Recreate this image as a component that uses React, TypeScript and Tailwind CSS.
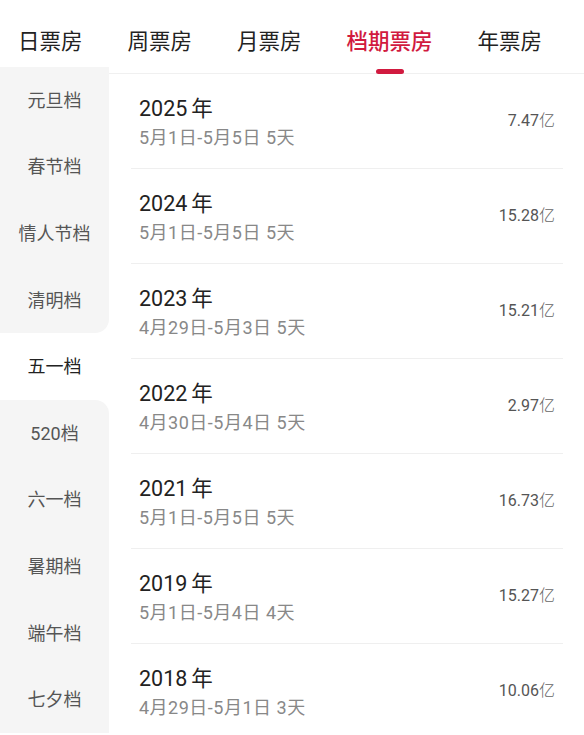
import React from 'react'

const tabs = ['日票房', '周票房', '月票房', '档期票房', '年票房']
const activeTab = 3

const seasons = ['元旦档', '春节档', '情人节档', '清明档', '五一档', '520档', '六一档', '暑期档', '端午档', '七夕档']
const activeSeason = 4

const rows = [
  { year: '2025', range: '5月1日-5月5日 5天', value: '7.47' },
  { year: '2024', range: '5月1日-5月5日 5天', value: '15.28' },
  { year: '2023', range: '4月29日-5月3日 5天', value: '15.21' },
  { year: '2022', range: '4月30日-5月4日 5天', value: '2.97' },
  { year: '2021', range: '5月1日-5月5日 5天', value: '16.73' },
  { year: '2019', range: '5月1日-5月4日 4天', value: '15.27' },
  { year: '2018', range: '4月29日-5月1日 3天', value: '10.06' },
]

export default function App() {
  return (
    <div className="w-[584px] h-[735px] overflow-hidden bg-white font-['Roboto','Noto_Sans_CJK_SC',sans-serif]">
      <header className="h-[74px] flex items-center pl-[18px] gap-[45px] border-b border-[#f0f0f0]">
        {tabs.map((t, i) => (
          <div
            key={t}
            className={
              'relative h-full flex items-center text-[21.5px] pt-[12px] ' +
              (i === activeTab ? 'text-[#d11a3f] font-medium' : 'text-[#222]')
            }
          >
            {t}
            {i === activeTab && (
              <span className="absolute left-1/2 -translate-x-1/2 bottom-[-1px] w-[28px] h-[5px] rounded-full bg-[#d11a3f]" />
            )}
          </div>
        ))}
      </header>

      <div className="flex">
        <aside className="w-[109px] shrink-0 flex flex-col -mt-[7px]">
          {seasons.map((s, i) => {
            let cls = 'bg-[#f5f5f5] text-[#555]'
            if (i === activeSeason) cls = 'bg-white text-[#222]'
            else if (i === activeSeason - 1) cls += ' rounded-br-[14px]'
            else if (i === activeSeason + 1) cls += ' rounded-tr-[14px]'
            return (
              <div key={s} className={'h-[66.6px] shrink-0 flex items-center justify-center text-[18px] ' + cls}>
                {s}
              </div>
            )
          })}
        </aside>

        <main className="flex-1 flex flex-col">
          {rows.map((r) => (
            <div
              key={r.year}
              className="h-[95px] shrink-0 ml-[22px] mr-[21px] flex items-center justify-between border-b border-[#efefef]"
            >
              <div className="pl-[8px] pt-[3px]">
                <div className="text-[21.5px] leading-[28px] text-[#222]">
                  {r.year}
                  <span className="ml-[4px]">年</span>
                </div>
                <div className="mt-[3px] text-[18px] leading-[24px] text-[#888] tracking-[0.5px]">{r.range}</div>
              </div>
              <div className="pr-[8px] text-[16px] text-[#555]">
                {r.value}
                <span className="font-light text-[#666]">亿</span>
              </div>
            </div>
          ))}
        </main>
      </div>
    </div>
  )
}
